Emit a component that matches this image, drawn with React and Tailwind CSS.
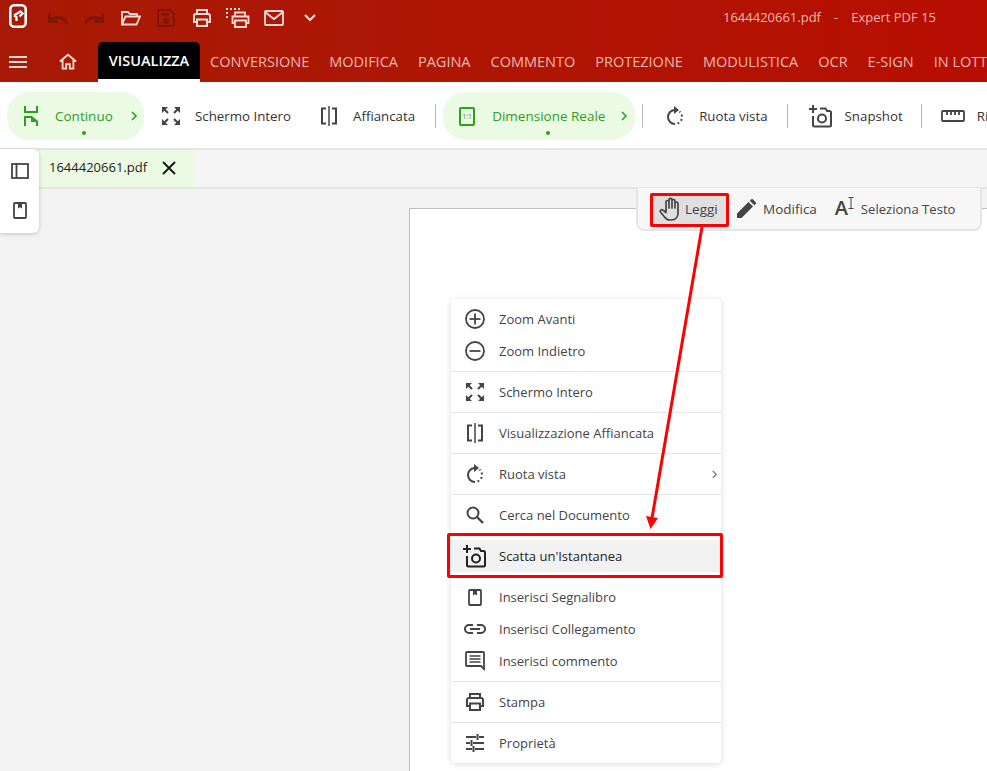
import { Fragment } from 'react'

const font = { fontFamily: '"Open Sans", "Noto Sans", sans-serif' }

function Logo() {
  return (
    <svg width="18" height="24" viewBox="0 0 18 24" fill="none" stroke="#fff" strokeWidth="2.600" className="mb-[4px] shrink-0">
      <rect x="1.300" y="1.300" width="15.400" height="21.400" rx="4" />
      <path d="M5 11.500l6.500-4 2 2-3 3" strokeWidth="2.200" />
      <path d="M5 11.500l2.500 1.500v4" strokeWidth="2.200" />
    </svg>
  )
}

function Undo({ flip }) {
  return (
    <svg width="20" height="11" viewBox="0 0 20 11" fill="none" stroke="#7d1508" strokeWidth="2.800" className={flip ? '-scale-x-100' : ''}>
      <path d="M18.800 10.500C16.500 4.500 9.500 2.500 3 6.500" />
      <path d="M1.500 0.500v8h8" />
    </svg>
  )
}

function Printer({ color = '#fbdcd6', size = 20, sw = 2 }) {
  return (
    <svg width={size} height={size} viewBox="0 0 20 20" fill="none" stroke={color} strokeWidth={sw}>
      <path d="M5 6V2h10v4" />
      <path d="M5 14H2V8a2 2 0 0 1 2-2h12a2 2 0 0 1 2 2v6h-3" />
      <path d="M5 11.500h10V18H5z" />
    </svg>
  )
}

function Fullscreen({ size = 18 }) {
  return (
    <svg width={size} height={size} viewBox="0 0 18 18" fill="#444" stroke="#444">
      <path d="M0 0h6L0 6zM18 0v6L12 0zM0 18v-6L6 18zM18 18h-6L18 12z" strokeWidth="0" />
      <path d="M2 2l4 4M16 2l-4 4M2 16l4-4M16 16l-4-4" strokeWidth="2" fill="none" />
    </svg>
  )
}

function SideBySide() {
  return (
    <svg width="18" height="20" viewBox="0 0 18 20" fill="none" stroke="#444" strokeWidth="2">
      <path d="M6 2.500H2V17.500h4M12 2.500h4V17.500h-4" />
      <path d="M9 0v20" strokeWidth="1.500" />
    </svg>
  )
}

function Rotate() {
  return (
    <svg width="18" height="20" viewBox="0 0 18 20" fill="none" stroke="#444" strokeWidth="2">
      <path d="M9 4A7 7 0 0 0 9 18" />
      <path d="M11.500 17.500A7 7 0 0 0 13.500 5.600" strokeDasharray="2 2.400" />
      <path d="M8 0v8l5-4z" fill="#444" stroke="none" />
    </svg>
  )
}

function Camera({ color = '#444', size = 24 }) {
  return (
    <svg width={size} height={size} viewBox="0 0 24 24" fill="none" stroke={color} strokeWidth="2">
      <path d="M4 1v8M0 5h8" />
      <path d="M4 12v9a1.500 1.500 0 0 0 1.500 1.500h15A1.500 1.500 0 0 0 22 21V8.500A1.500 1.500 0 0 0 20.500 7H18l-1.500-2.500H11" />
      <circle cx="13" cy="14.500" r="4" />
    </svg>
  )
}

function Bookmark({ color = '#444' }) {
  return (
    <svg width="14" height="17" viewBox="0 0 14 17" fill="none" stroke={color} strokeWidth="1.800">
      <rect x="1" y="1" width="12" height="15" rx="1" />
      <path d="M5 1v5.500l2-1.200 2 1.200V1" fill={color} stroke="none" />
    </svg>
  )
}

function Hand() {
  return (
    <svg width="22" height="24" viewBox="0 0 22 24" fill="none" stroke="#444" strokeWidth="1.700" strokeLinecap="round" strokeLinejoin="round">
      <path d="M7 12V5a1.500 1.500 0 0 1 3 0v6M10 11V2.800a1.500 1.500 0 0 1 3 0V11M13 11V4a1.500 1.500 0 0 1 3 0v7M16 11V6.500a1.500 1.500 0 0 1 3 0V16c0 4-2.500 7-6.500 7H11c-2.500 0-4-1-5.500-3L1.500 15c-1-1.500 1-3 2.500-1.800L7 15.500V12" />
    </svg>
  )
}

function Pencil() {
  return (
    <svg width="19" height="19" viewBox="0 0 19 19" fill="#444">
      <path d="M0 19v-4.500L11.500 3l4.500 4.500L4.500 19zM12.800 1.700 14 .5a1.500 1.500 0 0 1 2.100 0l2.400 2.400a1.500 1.500 0 0 1 0 2.100l-1.200 1.200z" />
    </svg>
  )
}

function TextCursor() {
  return (
    <span className="flex items-start w-[20px] h-[20px] text-[#444] leading-none">
      <span className="text-[20px] font-semibold leading-[20px]">A</span>
      <svg width="6" height="12" viewBox="0 0 6 12" fill="none" stroke="#444" strokeWidth="1" className="mt-[-1px]">
        <path d="M0.500 0.500h5M3 0.500v11M0.500 11.500h5" />
      </svg>
    </span>
  )
}

function Circle({ plus }) {
  return (
    <svg width="20" height="20" viewBox="0 0 20 20" fill="none" stroke="#444" strokeWidth="1.800">
      <circle cx="10" cy="10" r="9" />
      <path d="M4.500 10h11" />
      {plus && <path d="M10 4.500v11" />}
    </svg>
  )
}

function Search() {
  return (
    <svg width="18" height="18" viewBox="0 0 18 18" fill="none" stroke="#444" strokeWidth="2">
      <circle cx="7" cy="7" r="5.500" />
      <path d="M11 11l6 6" strokeWidth="2.400" />
    </svg>
  )
}

function LinkIcon() {
  return (
    <svg width="24" height="12" viewBox="0 0 24 12" fill="none" stroke="#444" strokeWidth="2">
      <path d="M10 2H6a4 4 0 0 0 0 8h4M14 2h4a4 4 0 0 1 0 8h-4M7 6h10" />
    </svg>
  )
}

function Comment() {
  return (
    <svg width="20" height="20" viewBox="0 0 20 20" fill="none" stroke="#444" strokeWidth="1.800">
      <path d="M1 2a1 1 0 0 1 1-1h16a1 1 0 0 1 1 1v16l-3-3H2a1 1 0 0 1-1-1z" />
      <path d="M4.500 5h11M4.500 8h11M4.500 11h11" strokeWidth="1.500" />
    </svg>
  )
}

function Sliders() {
  return (
    <svg width="18" height="18" viewBox="0 0 18 18" fill="none" stroke="#444" strokeWidth="2">
      <path d="M0 3h10M13 3h5M0 9h4M7 9h11M0 15h6M9 15h9M11.500 0v6M5.500 6v6M7.500 12v6" />
    </svg>
  )
}

function Chevron({ color, size = 8 }) {
  return (
    <svg width={size} height={size * 1.250} viewBox="0 0 8 10" fill="none" stroke={color} strokeWidth="1.600">
      <path d="M2 1l4 4-4 4" />
    </svg>
  )
}

function ContinuousIcon() {
  return (
    <svg width="14" height="20" viewBox="0 0 14 20" fill="none" stroke="#2f9e1f" strokeWidth="2">
      <path d="M1 0v6h12V0" />
      <path d="M1 20V11h6.500l5.500 4.500V20" />
      <path d="M7 11l6 5H7z" fill="#2f9e1f" stroke="none" />
    </svg>
  )
}

function RealSizeIcon() {
  return (
    <span className="flex items-center justify-center w-[16px] h-[19px] border-2 border-[#2f9e1f] rounded-[2px] text-[7px] font-medium text-[#2f9e1f] leading-none">
      1:1
    </span>
  )
}

const tabs = ['CONVERSIONE', 'MODIFICA', 'PAGINA', 'COMMENTO', 'PROTEZIONE', 'MODULISTICA', 'OCR', 'E-SIGN', 'IN LOTTI']

function GreenPill({ icon, label, className, textClass, dotClass, chevronClass }) {
  return (
    <div className={`relative flex items-center h-[48px] rounded-[22px] bg-[#ebfbe3] shrink-0 ${className}`}>
      <span className="flex justify-center w-[48px]">{icon}</span>
      <span className={`text-[13.5px] font-medium text-[#2f9e1f] whitespace-nowrap ${textClass}`}>{label}</span>
      <span className={`ml-auto ${chevronClass}`}><Chevron color="#2f9e1f" /></span>
      <span className={`absolute bottom-[5px] w-[4px] h-[4px] rounded-full bg-[#2f9e1f] ${dotClass}`} />
    </div>
  )
}

function ToolButton({ icon, label, className }) {
  return (
    <div className={`flex items-center shrink-0 ${className}`}>
      <span className="flex justify-center w-[24px]">{icon}</span>
      <span className="ml-[12px] pt-[2px] text-[13.3px] text-[#333] whitespace-nowrap">{label}</span>
    </div>
  )
}

const Divider = ({ className }) => <div className={`w-px h-[24px] bg-[#bbb] shrink-0 ${className}`} />

const menuGroups = [
  [{ icon: <Circle plus />, label: 'Zoom Avanti' }, { icon: <Circle />, label: 'Zoom Indietro' }],
  [{ icon: <Fullscreen />, label: 'Schermo Intero' }],
  [{ icon: <SideBySide />, label: 'Visualizzazione Affiancata' }],
  [{ icon: <Rotate />, label: 'Ruota vista', sub: true }],
  [{ icon: <Search />, label: 'Cerca nel Documento' }],
  [{ icon: <Camera color="#222" />, label: "Scatta un'Istantanea", active: true }],
  [
    { icon: <Bookmark />, label: 'Inserisci Segnalibro' },
    { icon: <LinkIcon />, label: 'Inserisci Collegamento' },
    { icon: <Comment />, label: 'Inserisci commento' },
  ],
  [{ icon: <Printer color="#444" />, label: 'Stampa' }],
  [{ icon: <Sliders />, label: 'Proprietà' }],
]

function ContextMenu() {
  return (
    <div className="absolute left-[451px] top-[299px] w-[270px] bg-white rounded-[4px] shadow-[0_1px_6px_rgba(0,0,0,0.15)]">
      {menuGroups.map((group, i) => (
        <Fragment key={i}>
          {i > 0 && <div className="h-px bg-[#e6e6e6]" />}
          <div className="py-[4px]">
            {group.map(item => (
              <div key={item.label} className={`flex items-center h-[32px] ${item.active ? 'bg-[#f2f2f2] text-[#222]' : 'text-[#444]'}`}>
                <span className="flex justify-center w-[48px]">{item.icon}</span>
                <span className="pt-[2px] text-[13px]">{item.label}</span>
                {item.sub && <span className="ml-auto mr-[3px]"><Chevron color="#777" size={7} /></span>}
              </div>
            ))}
          </div>
        </Fragment>
      ))}
    </div>
  )
}

export default function App() {
  return (
    <div className="relative w-[987px] h-[771px] overflow-hidden flex flex-col bg-[#f3f3f3]" style={font}>
      {/* Title + tabs */}
      <div className="h-[82px] shrink-0 bg-gradient-to-r from-[#a71a05] to-[#b70e02]">
        <div className="flex items-center h-[42px] pb-[6px] pl-[9px]">
          <Logo />
          <div className="flex items-center ml-[21px] gap-[16px]">
            <Undo />
            <Undo flip />
          </div>
          <svg width="20" height="16" viewBox="0 0 20 16" fill="none" stroke="#fbdcd6" strokeWidth="1.800" className="ml-[17px]">
            <path d="M1 14V2h6l2 2h7v2" />
            <path d="M1 14.500h14.500L19 6.500H4.500z" />
          </svg>
          <svg width="18" height="18" viewBox="0 0 18 18" fill="none" stroke="#7d1508" strokeWidth="2" className="ml-[16px]">
            <path d="M1 3a2 2 0 0 1 2-2h10l4 4v10a2 2 0 0 1-2 2H3a2 2 0 0 1-2-2z" />
            <path d="M4 5.500h8" strokeWidth="2.500" />
            <circle cx="9" cy="12" r="2" fill="#7d1508" />
          </svg>
          <span className="ml-[17px]"><Printer /></span>
          <svg width="24" height="20" viewBox="0 0 24 20" fill="none" stroke="#fbdcd6" strokeWidth="1.800" className="ml-[14px]">
            <path d="M0 1h16M0 5h2M0 9h2" strokeDasharray="2 2" />
            <path d="M9 8V4.500h10V8M9 15H6.500V8.500h16V15H20M9 12.500h11V19H9z" />
          </svg>
          <svg width="20" height="16" viewBox="0 0 20 16" fill="none" stroke="#fbdcd6" strokeWidth="1.800" className="ml-[14px]">
            <rect x="1" y="1" width="18" height="14" rx="1" />
            <path d="M1 2l9 7 9-7" />
          </svg>
          <svg width="12" height="8" viewBox="0 0 12 8" fill="none" stroke="#fbdcd6" strokeWidth="2" className="ml-[20px]">
            <path d="M1 1l5 5 5-5" />
          </svg>
          <div className="flex gap-[13px] ml-auto mr-[51px] text-[13px] text-[#eab9b0] whitespace-nowrap">
            <span>1644420661.pdf</span>
            <span>-</span>
            <span>Expert PDF 15</span>
          </div>
        </div>
        <div className="flex items-end h-[40px] pl-[9px] overflow-hidden">
          <svg width="18" height="12" viewBox="0 0 18 12" fill="none" stroke="#fbdcd6" strokeWidth="1.800" className="mb-[14px] shrink-0">
            <path d="M0 1h18M0 6h18M0 11h18" />
          </svg>
          <svg width="18" height="17" viewBox="0 0 20 18" fill="none" stroke="#fbdcd6" strokeWidth="2" className="ml-[32px] mb-[12px] shrink-0">
            <path d="M1 9l9-7.500L19 9M4 7v10h4v-5h4v5h4V7" />
          </svg>
          <div className="ml-[21px] h-[40px] w-[102px] shrink-0 rounded-t-[5px] bg-black border-b-[3px] border-white flex items-center justify-center text-[14.5px] font-semibold text-white">
            VISUALIZZA
          </div>
          <div className="flex h-[40px] items-center gap-[20px] ml-[10px] text-[14.5px] text-[#eab9b0] whitespace-nowrap">
            {tabs.map(t => <span key={t}>{t}</span>)}
          </div>
        </div>
      </div>

      {/* Ribbon */}
      <div className="flex items-center h-[68px] pt-[10px] pb-[8px] pl-[7px] bg-white border-b-2 border-[#e5e5e5] shrink-0 overflow-hidden">
        <GreenPill icon={<ContinuousIcon />} label="Continuo" className="w-[137px]" dotClass="left-[75px]" chevronClass="mr-[6px]" />
        <ToolButton icon={<Fullscreen />} label="Schermo Intero" className="ml-[15px]" />
        <ToolButton icon={<SideBySide />} label="Affiancata" className="ml-[26px]" />
        <Divider className="ml-[20px]" />
        <GreenPill icon={<RealSizeIcon />} label="Dimensione Reale" className="ml-[7px] w-[192px]" textClass="ml-[1px]" dotClass="left-[103px]" chevronClass="mr-[7px]" />
        <Divider className="ml-[7px]" />
        <ToolButton icon={<Rotate />} label="Ruota vista" className="ml-[20px]" />
        <Divider className="ml-[19px]" />
        <ToolButton icon={<Camera />} label="Snapshot" className="ml-[21px]" />
        <Divider className="ml-[18px]" />
        <ToolButton
          icon={
            <svg width="24" height="12" viewBox="0 0 24 12" fill="none" stroke="#444" strokeWidth="1.800">
              <rect x="1" y="1" width="22" height="10" rx="1" />
              <path d="M6 1v4M10 1v4M14 1v4M18 1v4" />
            </svg>
          }
          label="Righello"
          className="ml-[19px]"
        />
      </div>

      {/* File tab strip */}
      <div className="flex h-[39px] bg-[#f5f5f5] border-b-2 border-[#e5e5e5] shrink-0">
        <div className="flex items-center h-[37px] w-[194px] pb-[2px] pl-[49px] bg-[#ebfbe3] text-[13px] text-[#222]">
          1644420661.pdf
          <svg width="14" height="14" viewBox="0 0 14 14" fill="none" stroke="#111" strokeWidth="1.800" className="ml-[15px]">
            <path d="M1 1l12 12M13 1L1 13" />
          </svg>
        </div>
      </div>

      {/* Document area */}
      <div className="flex-1 flex pl-[409px] pt-[19px]">
        <div className="flex-1 bg-white border-l border-t border-[#bdbdbd]" />
      </div>

      {/* Left side panel */}
      <div className="absolute left-0 top-[149px] w-[39px] h-[84px] flex flex-col items-center gap-[23px] pt-[14px] bg-white rounded-r-[6px] shadow-[0_1px_4px_rgba(0,0,0,0.2)]">
        <svg width="18" height="16" viewBox="0 0 18 16" fill="none" stroke="#444" strokeWidth="1.800">
          <rect x="1" y="1" width="16" height="14" />
          <path d="M5.500 1v14" />
        </svg>
        <Bookmark />
      </div>

      {/* Mode switcher */}
      <div className="absolute left-[636px] top-[188px] w-[346px] h-[43px] flex items-center pl-[15px] bg-[#f7f7f7] border-2 border-t-0 border-[#e5e5e5] rounded-b-[8px] text-[13.5px] text-[#444]">
        <div className="flex items-center gap-[4px] w-[76px] h-[32px] pl-[6px] bg-[#dfdfdf]">
          <Hand />
          <span className="pt-[2px]">Leggi</span>
        </div>
        <div className="flex items-center gap-[7px] ml-[8px]">
          <Pencil />
          <span className="pt-[2px]">Modifica</span>
        </div>
        <div className="flex items-center gap-[6px] ml-[18px]">
          <TextCursor />
          <span className="pt-[2px] text-[13.1px]">Seleziona Testo</span>
        </div>
      </div>

      <ContextMenu />

      {/* Red annotations */}
      <div className="absolute left-[650px] top-[193px] w-[79px] h-[34px] border-[3px] border-[#ff0000] rounded-[2px]" />
      <div className="absolute left-[447px] top-[533px] w-[276px] h-[45px] border-[3px] border-[#ff0000] rounded-[2px]" />
      <svg className="absolute left-0 top-0 pointer-events-none" width="987" height="771" viewBox="0 0 987 771" fill="none">
        <path d="M702 227L652 518" stroke="#ff0000" strokeWidth="3" />
        <path d="M646 516l12 2-7.500 11z" fill="#ff0000" />
      </svg>
    </div>
  )
}
